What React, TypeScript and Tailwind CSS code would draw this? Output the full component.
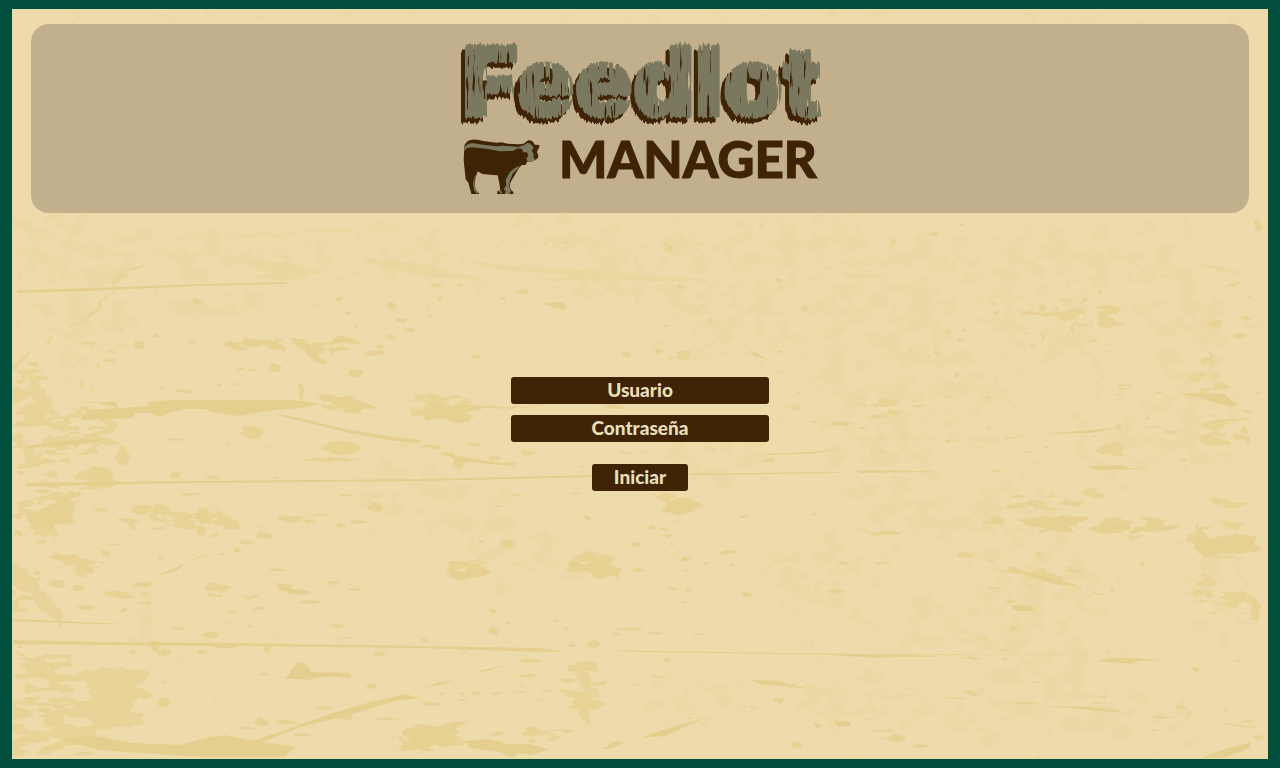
import type { InputHTMLAttributes } from 'react';

type Box = [x: number, y: number, width: number, height: number];

/* Areas of worn grain: centre x, centre y, radius x, radius y. */
const faintWear: Box[] = [
  [70, 240, 70, 50], [190, 250, 70, 30], [210, 310, 70, 25], [80, 320, 60, 40], [70, 360, 35, 30],
  [290, 260, 90, 18], [400, 250, 80, 25], [560, 230, 90, 20], [640, 275, 110, 30], [720, 260, 90, 45],
  [740, 330, 60, 45], [830, 240, 60, 40], [880, 320, 80, 60], [860, 400, 60, 50], [940, 280, 80, 50],
  [1060, 250, 80, 35], [1140, 260, 60, 35], [960, 400, 60, 50], [1060, 330, 70, 45], [1190, 330, 50, 50],
  [1200, 420, 50, 60], [1120, 440, 60, 40], [420, 490, 70, 40], [480, 520, 60, 30], [530, 560, 70, 30],
  [900, 510, 60, 40], [1010, 520, 60, 50], [950, 620, 70, 40], [1050, 590, 60, 50], [820, 580, 60, 50],
  [860, 700, 70, 40], [1000, 720, 80, 30], [1120, 720, 90, 35], [700, 700, 60, 30], [880, 460, 60, 40],
  [160, 620, 50, 25], [400, 480, 50, 30], [720, 450, 60, 50], [1210, 590, 50, 60], [1040, 660, 60, 40],
];

const wear: Box[] = [
  [45, 745, 60, 22], [70, 705, 70, 30], [115, 700, 38, 34], [40, 660, 40, 20], [25, 590, 22, 28],
  [50, 510, 38, 18], [70, 430, 50, 30], [95, 480, 24, 16], [40, 450, 30, 40], [30, 400, 22, 40],
  [330, 350, 22, 10], [265, 346, 24, 7], [340, 405, 36, 12], [440, 405, 40, 16], [160, 520, 40, 14],
  [215, 520, 28, 16], [80, 565, 30, 12], [680, 500, 26, 14], [590, 565, 28, 16], [465, 570, 26, 12],
  [585, 690, 22, 40], [540, 735, 25, 10], [1060, 524, 42, 11], [1130, 526, 44, 12], [1220, 540, 34, 20],
  [1060, 573, 32, 10], [1205, 590, 15, 22], [1235, 598, 26, 10], [1085, 315, 40, 16], [1210, 380, 18, 24],
  [1215, 435, 18, 22], [1120, 450, 28, 10], [1050, 505, 30, 10], [1100, 495, 26, 8], [1125, 390, 22, 8],
  [680, 248, 18, 7], [885, 403, 20, 10], [675, 358, 18, 8], [1235, 275, 12, 10], [430, 740, 40, 14],
  [560, 245, 20, 5], [1230, 500, 22, 12], [50, 530, 25, 12],
];

/* Small chips and nicks. */
const chips: Box[] = [
  [192, 299, 13, 5], [334, 296, 8, 4], [311, 305, 6, 2], [386, 303, 10, 5], [344, 311, 8, 3], [394, 318, 13, 4],
  [115, 329, 9, 3], [154, 334, 7, 4], [132, 342, 14, 6], [80, 341, 17, 4], [105, 350, 10, 2], [102, 358, 14, 3],
  [96, 363, 4, 6], [78, 380, 7, 8], [188, 342, 9, 3], [236, 367, 9, 3], [268, 363, 14, 9], [248, 368, 9, 3],
  [217, 383, 6, 3], [233, 383, 7, 3], [158, 387, 6, 2], [174, 389, 18, 4], [298, 382, 6, 19], [347, 369, 17, 8],
  [372, 345, 13, 3], [363, 351, 22, 5], [405, 328, 9, 4], [354, 325, 5, 3], [386, 335, 10, 4],
  [320, 441, 42, 14], [240, 425, 24, 14], [168, 438, 14, 3], [202, 449, 6, 2], [265, 446, 5, 4], [224, 443, 7, 2],
  [116, 446, 14, 20], [300, 457, 60, 5], [170, 472, 12, 6], [205, 475, 16, 4], [271, 476, 9, 4], [86, 466, 28, 18],
  [36, 489, 16, 5], [182, 493, 20, 3], [338, 494, 14, 3], [92, 508, 16, 4], [116, 519, 22, 3], [130, 505, 22, 10],
  [194, 507, 20, 18], [210, 518, 30, 8], [276, 515, 26, 8], [309, 513, 22, 4], [367, 503, 18, 9], [350, 520, 18, 4],
  [335, 524, 12, 3], [302, 519, 14, 3], [195, 525, 12, 11], [34, 541, 13, 3], [13, 531, 12, 5], [52, 540, 10, 2],
  [47, 554, 32, 7], [66, 558, 30, 8], [72, 565, 22, 8], [100, 550, 11, 6], [34, 571, 7, 3], [108, 544, 12, 2],
  [238, 540, 16, 4], [255, 532, 18, 7], [217, 552, 10, 3], [233, 549, 8, 3], [158, 556, 6, 4], [268, 568, 20, 4],
  [50, 580, 16, 8], [72, 586, 12, 6], [130, 582, 24, 5], [104, 592, 26, 4], [114, 594, 22, 4], [136, 601, 18, 3],
  [140, 591, 9, 6], [77, 605, 18, 5], [121, 608, 7, 4], [203, 583, 28, 9], [205, 594, 20, 4], [242, 596, 18, 3],
  [252, 607, 13, 3], [274, 583, 20, 8], [285, 590, 27, 5], [298, 600, 26, 4], [326, 582, 16, 3], [348, 588, 13, 3],
  [172, 627, 14, 4], [200, 632, 20, 6], [246, 624, 8, 4], [227, 612, 9, 2], [330, 624, 16, 3], [337, 637, 16, 2],
  [150, 640, 10, 12], [158, 648, 14, 8], [195, 650, 14, 4], [263, 645, 8, 8], [371, 652, 16, 3], [128, 650, 8, 3],
  [290, 662, 22, 17], [284, 673, 38, 6], [325, 672, 30, 6], [366, 683, 10, 6], [259, 673, 9, 2], [157, 698, 14, 8],
  [213, 696, 8, 2], [155, 705, 14, 2], [240, 727, 15, 3], [254, 718, 14, 8], [275, 720, 26, 5], [290, 733, 22, 4],
  [316, 705, 16, 4], [340, 712, 12, 8], [372, 718, 30, 2], [401, 728, 20, 6], [400, 745, 20, 5], [160, 680, 6, 4],
  [510, 494, 12, 3], [571, 493, 12, 2], [495, 505, 8, 3], [584, 516, 7, 4], [500, 540, 16, 8], [478, 540, 7, 3],
  [643, 525, 13, 3], [668, 521, 10, 2], [660, 527, 9, 3], [662, 533, 13, 5], [632, 543, 8, 3], [668, 543, 7, 2],
  [718, 550, 20, 4], [740, 515, 8, 3], [811, 512, 5, 5], [680, 557, 12, 4], [682, 569, 7, 4], [632, 568, 14, 4],
  [702, 561, 6, 3], [729, 564, 5, 3], [838, 561, 9, 4], [668, 588, 9, 2], [685, 589, 7, 2], [741, 593, 10, 4],
  [825, 589, 22, 4], [681, 601, 7, 2], [490, 609, 8, 4], [506, 623, 10, 2], [488, 627, 12, 9], [568, 644, 10, 3],
  [552, 619, 9, 4], [564, 627, 5, 3], [615, 627, 28, 4], [610, 632, 11, 3], [647, 632, 18, 3], [692, 633, 13, 2],
  [587, 641, 13, 8], [420, 639, 9, 2], [460, 650, 8, 2], [518, 659, 26, 3], [662, 659, 10, 3], [652, 675, 18, 2],
  [516, 674, 22, 4], [520, 684, 5, 2], [628, 684, 10, 2], [437, 693, 9, 2], [460, 693, 5, 3], [471, 692, 10, 3],
  [490, 692, 14, 2], [510, 691, 20, 2], [540, 691, 12, 2], [558, 689, 12, 4], [458, 699, 9, 2], [533, 699, 11, 2],
  [420, 701, 22, 5], [524, 727, 18, 10], [490, 732, 14, 3], [560, 729, 14, 4], [686, 718, 8, 2], [748, 706, 9, 2],
  [773, 698, 11, 5], [792, 740, 11, 9], [813, 724, 10, 3], [756, 681, 20, 4], [787, 685, 22, 2],
  [1003, 504, 25, 5], [1012, 495, 12, 4], [990, 515, 16, 10], [981, 522, 18, 2], [959, 525, 8, 2], [863, 531, 42, 4],
  [874, 561, 18, 3], [956, 552, 18, 5], [987, 560, 8, 2], [1005, 568, 18, 5], [988, 586, 18, 2], [1027, 584, 6, 5],
  [1011, 605, 25, 7], [1005, 600, 12, 3], [1093, 593, 12, 2], [1109, 587, 6, 4], [1138, 562, 8, 5], [1034, 552, 8, 4],
  [1240, 612, 8, 2], [1208, 611, 10, 3], [1250, 598, 10, 24], [1010, 627, 9, 4], [974, 638, 15, 2], [997, 649, 11, 3],
  [1001, 657, 9, 3], [959, 657, 22, 2], [1076, 661, 6, 2], [1105, 651, 6, 3], [1192, 667, 7, 6], [1234, 661, 10, 2],
  [850, 679, 13, 2], [1030, 681, 11, 2], [962, 690, 17, 5], [905, 694, 12, 1], [945, 697, 22, 2], [1099, 696, 9, 2],
  [1093, 702, 15, 2], [1174, 706, 13, 4], [1186, 712, 7, 2], [1222, 710, 6, 2], [1151, 729, 9, 2], [1240, 720, 12, 3],
  [862, 718, 10, 2], [870, 729, 26, 4], [888, 734, 18, 8], [880, 737, 8, 2], [912, 744, 18, 4], [1252, 735, 13, 5],
  [930, 233, 8, 3], [958, 223, 7, 2], [892, 241, 5, 3], [916, 237, 4, 5], [988, 303, 7, 2], [992, 310, 7, 4],
  [1020, 311, 30, 4], [1040, 305, 6, 6], [1059, 299, 9, 2], [1082, 298, 6, 3], [1098, 289, 4, 6], [1108, 307, 10, 3],
  [1098, 314, 7, 8], [1114, 322, 10, 3], [1070, 324, 5, 9], [1040, 332, 5, 9], [1022, 332, 7, 2], [1028, 345, 8, 2],
  [1206, 320, 18, 8], [1234, 333, 13, 6], [1240, 316, 13, 4], [1244, 296, 7, 3], [1224, 285, 4, 3], [1209, 350, 4, 14],
  [1092, 340, 7, 2], [1107, 350, 3, 3], [946, 330, 6, 3], [963, 329, 4, 3], [957, 337, 7, 4], [933, 350, 7, 6],
  [907, 347, 4, 5], [954, 372, 5, 6], [941, 395, 9, 2], [984, 396, 9, 2], [908, 405, 19, 2], [856, 397, 11, 2],
  [857, 404, 11, 2], [868, 415, 25, 4], [884, 410, 18, 5], [858, 426, 10, 2], [987, 425, 5, 3], [877, 438, 9, 2],
  [901, 433, 6, 2], [870, 449, 7, 3], [880, 450, 5, 4], [944, 440, 18, 2], [974, 446, 9, 2], [1022, 451, 11, 2],
  [1043, 446, 7, 2], [1036, 461, 7, 2], [1163, 431, 14, 3], [1180, 458, 8, 4], [993, 469, 8, 2], [1066, 467, 7, 2],
  [1087, 430, 12, 3], [1088, 436, 10, 2], [1115, 425, 6, 4], [1140, 426, 22, 2], [1143, 417, 9, 3], [1151, 392, 14, 2],
  [1254, 392, 7, 2], [1241, 427, 8, 6], [1233, 434, 14, 7], [1254, 219, 8, 12], [1245, 435, 6, 10], [1204, 438, 12, 6],
  [429, 283, 14, 4], [453, 284, 10, 2], [516, 290, 13, 4], [437, 297, 6, 3], [500, 297, 7, 3], [426, 314, 6, 3],
  [469, 355, 13, 4], [548, 302, 20, 3], [556, 305, 12, 4], [661, 324, 10, 3], [620, 353, 12, 3], [654, 349, 8, 6],
  [676, 286, 9, 3], [706, 318, 6, 4], [777, 350, 6, 3], [774, 279, 8, 3], [802, 305, 5, 7], [759, 224, 6, 3],
  [791, 405, 11, 5], [830, 422, 22, 4], [810, 421, 10, 2], [795, 391, 6, 3], [606, 404, 20, 5], [604, 435, 16, 2],
  [521, 451, 14, 4], [620, 451, 12, 3], [643, 450, 6, 2], [660, 437, 7, 3], [706, 448, 8, 2], [762, 458, 14, 5],
  [466, 443, 16, 3], [452, 456, 14, 14], [488, 457, 12, 4], [500, 462, 18, 3], [420, 445, 24, 4], [440, 452, 14, 4],
];

/* Long scratches and stains, drawn as filled outlines. */
const scratches = [
  'M17 290L60 289L200 284L288 282L285 284L200 286L110 290L60 292L17 293Z',
  'M62 402L115 402L119 408L150 406L146 403L170 400L292 400L320 404L308 407L278 410L262 412L240 416L215 413L205 409L185 409L168 413L160 417L150 413L135 413L133 418L110 419L80 420L88 410L118 408L98 403Z',
  'M270 413L300 418L345 429L400 438L420 440L420 443L395 441L350 433L300 421Z',
  'M26 446L60 441L106 439L90 443L50 447L28 448Z',
  'M28 483L90 482L200 481L420 479L640 474L840 472L840 473L640 476L420 481L200 483L90 485L28 487Z',
  'M13 619L60 621L125 624L90 624L13 621Z',
  'M13 640L100 642L240 643L420 646L540 648L566 652L540 652L420 648L240 646L224 649L210 646L100 645L13 644Z',
  'M600 650L660 651L840 654L1268 655L840 655L640 652Z',
  'M800 653L860 654L937 656L937 657L860 657Z',
  'M180 745L205 738L225 735L252 741L285 730L330 714L370 702L405 694L420 698L395 701L350 715L300 727L262 742L296 747L284 757L200 757L100 750L60 740L90 736L130 743Z',
  'M465 741L490 739L508 744L530 744L549 750L530 755L518 753L512 758L500 752L470 748Z',
  'M425 687L440 682L455 680L440 685ZM474 672L504 665L488 671Z',
  'M640 738L672 727L712 716L690 724L665 736Z',
  'M602 749L615 741L624 743L610 749Z',
  'M748 680L780 681L796 687L770 685ZM833 720L850 722L850 726L838 726Z',
  'M860 655L900 655L938 656L900 657L870 658Z',
  'M1096 661L1112 658L1136 658L1162 660L1138 661L1132 664L1110 662Z',
  'M1202 758L1222 750L1252 742L1250 748L1225 758Z',
  'M1008 701L1042 704L1020 704ZM1046 706L1090 707L1130 713L1100 711ZM1151 716L1178 718L1155 718ZM1216 722L1262 728L1240 727Z',
  'M1005 567L1030 573L1046 576L1066 582L1082 587L1055 584L1030 577Z',
  'M1010 605L1025 606L1036 611L1020 611Z',
  'M856 470L932 471L930 472L860 473Z',
  'M1039 434L1090 430L1117 428L1092 433ZM1002 438L1032 435L1006 439Z',
  'M1088 466L1122 465L1130 468L1150 469L1095 470Z',
  'M1178 393L1225 394L1230 400L1239 404L1232 407L1210 401ZM1240 409L1252 412L1250 414Z',
  'M1210 421L1250 418L1252 419L1215 422Z',
  'M155 576L170 570L186 563L176 571ZM191 560L209 553L198 559Z',
  'M683 300L692 307L704 315L698 312Z',
  'M723 334L735 340L730 338ZM750 350L758 354L768 360L755 356Z',
  'M544 304L560 302L568 309L552 307Z',
  'M442 453L470 458L518 466L500 465L460 461Z',
  'M760 454L810 452L850 447L810 454L770 455Z',
  'M290 673L294 668L300 662L306 668L312 672L350 673L340 676L300 679L284 679Z',
  'M275 582L293 589L312 591L290 594L280 588Z',
];

const raggedStains = [
  'M220 345L228 341L240 343L245 338L258 340L274 341L280 344L287 350L270 349L262 345L250 345L235 344L248 349L240 351L226 347Z',
  'M289 339L304 339L312 345L320 350L318 356L328 363L318 364L310 357L302 350Z',
  'M318 346L330 343L340 335L352 338L361 344L345 342L330 345ZM328 350L340 345L350 349L345 352L333 352Z',
  'M317 396L330 394L338 396L350 396L362 402L380 408L362 409L355 413L345 411L335 404L322 399Z',
  'M425 402L445 404L470 405L500 407L552 404L520 408L480 409L465 413L475 417L460 424L440 418L425 421L420 412L432 408Z',
  'M420 724L440 726L455 722L470 720L462 724L456 728L458 734L450 735L457 740L457 745L445 746L430 746L424 752L415 748L400 748L405 741L412 740L400 732L412 728Z',
  'M1014 519L1040 518L1060 516L1090 517L1085 522L1070 526L1073 533L1055 530L1040 534L1046 527L1030 525Z',
  'M1085 529L1100 525L1105 520L1115 524L1128 523L1130 529L1110 534L1095 533ZM1140 516L1158 518L1165 525L1180 527L1165 532L1150 528L1138 532L1130 536L1132 528L1148 524Z',
  'M1196 523L1208 537L1220 541L1236 534L1258 537L1252 544L1262 550L1240 554L1222 552L1205 558L1194 548Z',
  'M24 508L36 512L60 500L70 492L82 494L60 504L68 512L72 522L54 524L52 531L38 528L28 522Z',
  'M448 562L470 562L484 563L480 567L492 570L484 577L460 580L445 573L465 571L468 567L450 569Z',
  'M584 552L600 560L612 566L620 570L618 579L608 576L600 580L592 573L570 568L568 561L588 565L592 560Z',
  'M650 492L670 500L690 497L702 505L690 512L678 516L664 510L668 504Z',
];

const softScratches = [
  'M12 365L28 353L32 352L24 360L12 372ZM12 368L38 376L40 390L52 399L50 410L70 418L52 420L40 408L32 395L30 380Z',
  'M60 331L82 321L95 310L100 301L112 292L112 280L122 271L145 264L146 267L128 272L116 283L114 292L103 301L98 312L86 322Z',
  'M43 347L50 337L54 335L50 343Z',
  'M12 562L28 570L38 587L50 598L62 613L62 628L52 616L38 608L32 592L12 584Z',
  'M85 670L118 668L150 672L145 682L130 688L140 696L130 710L145 724L100 730L88 718L70 710L92 700L88 685L72 676Z',
  'M12 700L40 702L92 703L60 708L12 704ZM12 728L80 733L130 742L120 748L70 740L12 734Z',
  'M1240 599L1258 601L1262 606L1254 612L1256 622L1251 620L1254 608Z',
  'M574 672L582 662L592 680L590 690L600 694L590 696L580 684ZM576 704L588 708L590 722L580 718Z',
];

const paleScratches = [
  'M188 241L240 235L340 229L420 224L340 231L240 237Z',
  'M235 260L290 262L320 272L290 282L250 277L270 272Z',
  'M360 258L420 263L480 279L510 282L430 278L380 268Z',
  'M460 260L520 266L600 270L680 277L710 281L620 281L540 280L570 275L500 270Z',
  'M840 272L900 278L850 278Z',
  'M1190 260L1240 272L1245 275L1220 272Z',
];

function chipPath([x, y, w, h]: Box) {
  return `M${x} ${y + h * 0.6}L${x + w * 0.25} ${y}L${x + w * 0.7} ${y + h * 0.1}L${x + w} ${y + h * 0.45}L${x + w * 0.75} ${y + h}L${x + w * 0.3} ${y + h * 0.9}Z`;
}

function WornPaper() {
  return (
    <svg
      className="absolute inset-0 size-full"
      viewBox="12 9 1256 750"
      preserveAspectRatio="none"
      aria-hidden="true"
    >
      <defs>
        <filter id="faint" filterUnits="userSpaceOnUse" x="12" y="9" width="1256" height="750" colorInterpolationFilters="sRGB">
          <feTurbulence type="fractalNoise" baseFrequency="0.045 0.06" numOctaves="4" seed="4" />
          <feColorMatrix values="0 0 0 0 0  0 0 0 0 0  0 0 0 0 0  1 0 0 0 0" result="noise" />
          <feGaussianBlur in="SourceAlpha" stdDeviation="14" />
          <feComposite in2="noise" operator="arithmetic" k2="0.3" k3="1" k4="-0.8" />
          <feComponentTransfer result="shape">
            <feFuncA type="linear" slope="25" intercept="0" />
          </feComponentTransfer>
          <feFlood floodColor="#ebd8a4" />
          <feComposite in2="shape" operator="in" />
        </filter>
        <filter id="worn" filterUnits="userSpaceOnUse" x="12" y="9" width="1256" height="750" colorInterpolationFilters="sRGB">
          <feTurbulence type="fractalNoise" baseFrequency="0.04 0.11" numOctaves="3" seed="9" />
          <feColorMatrix values="0 0 0 0 0  0 0 0 0 0  0 0 0 0 0  1 0 0 0 0" result="noise" />
          <feGaussianBlur in="SourceAlpha" stdDeviation="5" />
          <feComposite in2="noise" operator="arithmetic" k2="0.4" k3="1" k4="-0.87" />
          <feComponentTransfer result="shape">
            <feFuncA type="linear" slope="25" intercept="0" />
          </feComponentTransfer>
          <feFlood floodColor="#e8d396" />
          <feComposite in2="shape" operator="in" />
        </filter>
        <filter id="ragged" filterUnits="userSpaceOnUse" x="12" y="9" width="1256" height="750" colorInterpolationFilters="sRGB">
          <feTurbulence type="fractalNoise" baseFrequency="0.07 0.2" numOctaves="2" seed="2" />
          <feDisplacementMap in="SourceGraphic" scale="5" xChannelSelector="R" yChannelSelector="G" />
        </filter>
      </defs>
      <g filter="url(#faint)">
        {faintWear.map(([x, y, rx, ry]) => (
          <ellipse key={`${x}-${y}`} cx={x} cy={y} rx={rx} ry={ry} />
        ))}
        <rect x="12" y="9" width="1256" height="16" />
      </g>
      <g filter="url(#worn)">
        {wear.map(([x, y, rx, ry]) => (
          <ellipse key={`${x}-${y}`} cx={x} cy={y} rx={rx} ry={ry} />
        ))}
      </g>
      <g filter="url(#ragged)">
        <path d={paleScratches.join('')} fill="#ead7a0" />
        <path d={softScratches.join('')} fill="#e8d398" />
        <path d={chips.map(chipPath).join('')} fill="#e7d193" />
        <path d={raggedStains.join('')} fill="#e6d092" />
      </g>
      <path d={scratches.join('')} fill="#e5cf8e" />
    </svg>
  );
}

function Logo() {
  return (
    <svg
      className="block h-auto w-[364px] max-w-full overflow-visible"
      viewBox="458 40 364 156"
      role="img"
      aria-label="Feedlot Manager"
    >
      <defs>
        <filter id="wood" filterUnits="userSpaceOnUse" x="450" y="30" width="380" height="110" colorInterpolationFilters="sRGB">
          <feTurbulence type="fractalNoise" baseFrequency="0.4 0.015" numOctaves="2" seed="7" />
          <feColorMatrix values="0 0 0 0 0.5  1 0 0 0 0  0 0 0 0 0  0 0 0 0 1" result="grain" />
          <feDisplacementMap in="SourceGraphic" in2="grain" scale="8" xChannelSelector="R" yChannelSelector="G" result="rough" />
          <feTurbulence type="fractalNoise" baseFrequency="0.3 0.03" numOctaves="2" seed="3" />
          <feColorMatrix values="0 0 0 0 0  0 0 0 0 0  0 0 0 0 0  12 0 0 0 -7.6" result="cracks" />
          <feComposite in="rough" in2="cracks" operator="out" result="face" />
          <feOffset in="rough" dx="-4" dy="5" result="back" />
          <feFlood floodColor="#3e2305" />
          <feComposite in2="back" operator="in" result="shade" />
          <feMerge>
            <feMergeNode in="shade" />
            <feMergeNode in="face" />
          </feMerge>
        </filter>
      </defs>
      <text
        x="462"
        y="116"
        fontFamily="Inter, 'Liberation Sans', sans-serif"
        fontWeight="900"
        fontSize="96"
        fill="#7a785f"
        stroke="#7a785f"
        strokeWidth="3"
        strokeLinejoin="round"
        filter="url(#wood)"
      >
        Feedlot
      </text>
      <text
        x="559"
        y="178"
        fontFamily="Lato, 'Liberation Sans', sans-serif"
        fontWeight="900"
        fontSize="51"
        fill="#3e2305"
        stroke="#3e2305"
        strokeWidth="1"
      >
        MANAGER
      </text>
      <g transform="translate(455 130) scale(.3333)">
        <path
          fill="#3e2305"
          d="M28 50C30 37 40 30 52 29C66 27 72 31 84 33L124 38L140 37L158 41L190 43L206 41L215 34L222 30L233 34L239 44L253 45L253 52L248 60L246 67L250 76L249 84L240 91L228 95L216 95L212 105L200 105L190 117L176 141L166 158L165 172L168 180L175 186V192H127V184L136 181L133 160L128 136L106 134L82 132L68 124L61 146L59 165L62 179L72 190V192H49L47 183L40 158L32 148L29 120L26 90Z"
        />
        <path
          fill="#7a785f"
          d="M28 57C29 45 43 39 55 40L85 44L124 49L145 47L190 51L208 45L218 38L226 41L232 48L236 53L230 62L236 72L235 82L241 90L228 96L217 94L214 85L220 77L216 67L205 67L200 56L188 55L174 63L134 64L95 56L50 52L36 54L29 63Z"
        />
        <path
          fill="#7a785f"
          d="M195 107L190 115L174 130L164 154L163 172L168 184L163 192H150L152 182L146 178L154 165L152 150L158 138L165 126L178 115ZM67 129L59 146L58 163L61 179L72 190L64 190L57 180L54 160L59 140ZM134 178L142 188L139 191L132 185Z"
        />
      </g>
    </svg>
  );
}

function Field({ label, ...props }: { label: string } & InputHTMLAttributes<HTMLInputElement>) {
  return (
    <input
      aria-label={label}
      placeholder={label}
      className="h-[27px] w-full rounded-[3px] bg-[#3e2305] px-3 pb-0.5 text-center text-[19px] leading-6 font-black text-[#e8dfbb] outline-none placeholder:text-[#e8dfbb] placeholder:opacity-100"
      {...props}
    />
  );
}

export default function App() {
  return (
    <div className="flex min-h-screen flex-col border-x-12 border-y-[9px] border-[#034f3e] bg-[#eedbab] font-[Lato,'Liberation_Sans',sans-serif]">
      <main className="relative flex grow flex-col items-center px-[19px] pt-[15px] pb-8">
        <WornPaper />
        <header className="relative flex w-full justify-center rounded-[18px] bg-[#c1b08b] px-4 pt-4 pb-[17px]">
          <h1>
            <Logo />
          </h1>
        </header>
        <form
          className="relative mt-41 flex w-[258px] flex-col items-center gap-[11px]"
          onSubmit={(event) => event.preventDefault()}
        >
          <Field label="Usuario" name="usuario" type="text" autoComplete="username" />
          <Field label="Contraseña" name="clave" type="password" autoComplete="current-password" />
          <button
            type="submit"
            className="mt-[11px] h-[27px] rounded-[3px] bg-[#3e2305] px-[22px] pb-0.5 text-[19px] leading-6 font-black text-[#e8dfbb]"
          >
            Iniciar
          </button>
        </form>
      </main>
    </div>
  );
}
